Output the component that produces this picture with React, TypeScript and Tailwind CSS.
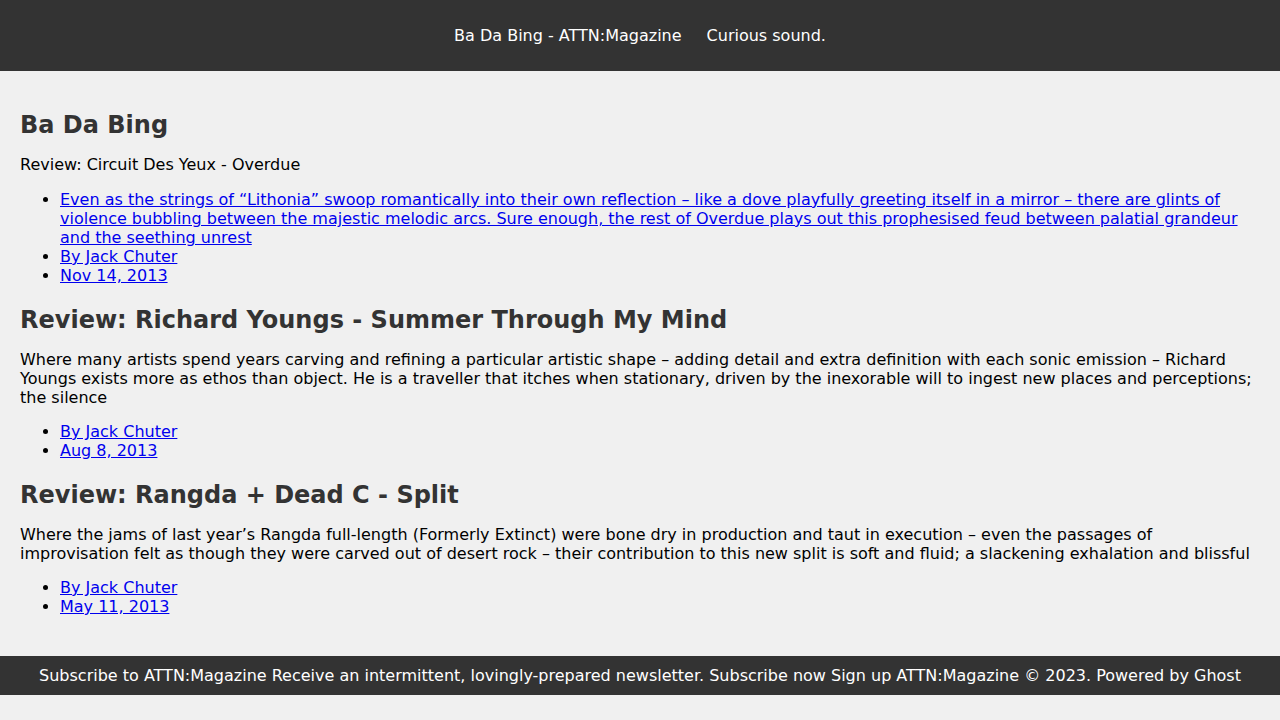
export default function App() {
  const posts = [
    {
      title: "Review: Richard Youngs - Summer Through My Mind",
      excerpt:
        "Where many artists spend years carving and refining a particular artistic shape – adding detail and extra definition with each sonic emission – Richard Youngs exists more as ethos than object. He is a traveller that itches when stationary, driven by the inexorable will to ingest new places and perceptions; the silence",
      date: "Aug 8, 2013",
    },
    {
      title: "Review: Rangda + Dead C - Split",
      excerpt:
        "Where the jams of last year’s Rangda full-length (Formerly Extinct) were bone dry in production and taut in execution – even the passages of improvisation felt as though they were carved out of desert rock – their contribution to this new split is soft and fluid; a slackening exhalation and blissful",
      date: "May 11, 2013",
    },
  ];

  const link = "text-[#0000ee] underline";

  return (
    <div className="min-h-[720px] bg-[#f0f0f0] font-['DejaVu_Sans',sans-serif] text-base leading-[19px] text-black">
      <header className="h-[71px] bg-[#333333] flex items-center justify-center gap-[25px] text-white">
        <a>Ba Da Bing - ATTN:Magazine</a>
        <a>Curious sound.</a>
      </header>

      <main className="px-5 pt-[40px] pb-[19px]">
        <h2 className="text-2xl font-bold text-[#333333] leading-[28px] mb-4">Ba Da Bing</h2>
        <p className="mb-4">Review: Circuit Des Yeux - Overdue</p>
        <ul className="list-disc pl-10 mb-[21px]">
          <li>
            <a className={link}>
              Even as the strings of “Lithonia” swoop romantically into their own reflection – like a dove playfully
              greeting itself in a mirror – there are glints of violence bubbling between the majestic melodic arcs. Sure
              enough, the rest of Overdue plays out this prophesised feud between palatial grandeur and the seething
              unrest
            </a>
          </li>
          <li>
            <a className={link}>By Jack Chuter</a>
          </li>
          <li>
            <a className={link}>Nov 14, 2013</a>
          </li>
        </ul>

        {posts.map((post, i) => (
          <article key={i}>
            <h2 className="text-2xl font-bold text-[#333333] leading-[28px] mb-[15.5px]">{post.title}</h2>
            <p className="mb-[15.5px]">{post.excerpt}</p>
            <ul className="list-disc pl-10 mb-[21px]">
              <li>
                <a className={link}>By Jack Chuter</a>
              </li>
              <li>
                <a className={link}>{post.date}</a>
              </li>
            </ul>
          </article>
        ))}
      </main>

      <footer className="bg-[#333333] text-white text-center py-[10px]">
        Subscribe to ATTN:Magazine Receive an intermittent, lovingly-prepared newsletter. Subscribe now Sign up
        ATTN:Magazine © 2023. Powered by Ghost
      </footer>
    </div>
  );
}
